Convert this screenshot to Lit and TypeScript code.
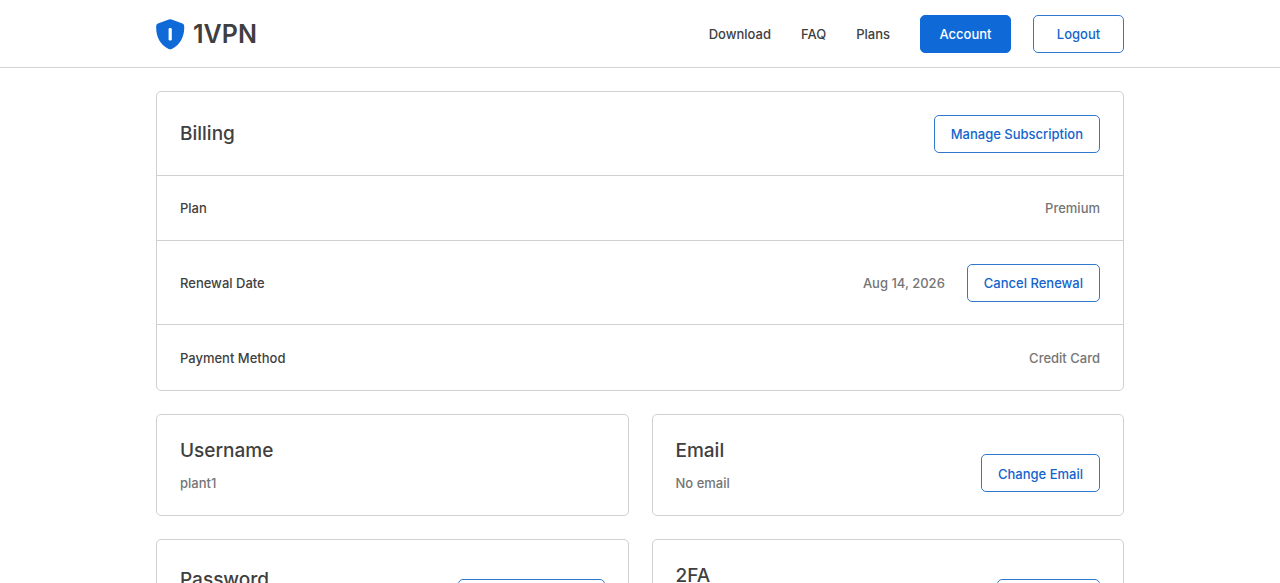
import { LitElement, html, css } from "lit";
import { customElement } from "lit/decorators.js";

@customElement("app-root")
export class AppRoot extends LitElement {
  static styles = css`
    :host {
      display: block;
      height: 100vh;
      overflow: hidden auto;
      scrollbar-width: none;
      background: #fff;
      color: #3f3f3f;
      font: 500 13px/18px Inter, "Noto Sans", sans-serif;
    }
    * { box-sizing: border-box; }
    h1, h2, p, dl, dt, dd { margin: 0; font-weight: 500; }
    a { color: inherit; text-decoration: none; }
    .wrap { width: 100%; max-width: 1016px; margin: 0 auto; padding: 0 24px; }
    .top { border-bottom: 1px solid #d2d5d6; }
    .bar {
      display: flex;
      align-items: center;
      justify-content: space-between;
      min-height: 67px;
    }
    .brand {
      display: flex;
      align-items: center;
      gap: 8px;
      font-size: 25px;
      font-weight: 600;
      line-height: 32px;
    }
    .shield { width: 29px; height: 32px; display: block; }
    .nav, .links, .value { display: flex; align-items: center; }
    .nav { gap: 30px; }
    .links { gap: 30px; }
    .value { gap: 22px; color: #757575; }
    .actions { display: flex; gap: 22px; }
    .btn {
      display: flex;
      align-items: center;
      justify-content: center;
      height: 38px;
      padding: 1px 15px 0;
      border: 1px solid #3178cc;
      border-radius: 5px;
      background: #fff;
      color: #1364cc;
      font: inherit;
      white-space: nowrap;
      cursor: pointer;
    }
    .row .btn, .tile .btn { padding: 1px 16px 0; }
    .wide { min-width: 91px; }
    .solid { background: #0f6ad7; border-color: #0f6ad7; color: #fff; }
    .content {
      display: grid;
      grid-template-columns: 1fr 1fr;
      gap: 23px;
      padding-top: 23px;
      padding-bottom: 23px;
    }
    .card { border: 1px solid #ced1d2; border-radius: 5px; }
    .billing { grid-column: 1 / -1; }
    .row {
      display: flex;
      align-items: center;
      justify-content: space-between;
      min-height: 65px;
      padding: 0 23px;
      border-bottom: 1px solid #ced1d2;
    }
    .tall { min-height: 84px; }
    .row.last { border-bottom: 0; }
    .title { font-size: 19px; line-height: 25px; }
    .tile {
      display: flex;
      align-items: flex-end;
      justify-content: space-between;
      min-height: 102px;
      padding: 23px;
    }
    .info { display: grid; gap: 11px; }
    .middle { align-self: center; }
    .sub { color: #757575; }
    .mask {
      width: 80px;
      height: 10px;
      background: radial-gradient(circle, #757575 3px, transparent 3px) 0 0 / 10px 10px;
    }
  `;

  render() {
    return html`
      <header class="top">
        <div class="wrap bar">
          <a class="brand" href="#">
            <svg class="shield" viewBox="0 0 29 32" aria-hidden="true">
              <path
                fill="#0f6ad7"
                d="M12.800 1.500Q14.200.9 15.600 1.500L26.500 5.600Q28.200 6.300 28.200 8C28.600 18 24.700 26.500 15.700 31Q14.200 31.700 12.700 31C3.700 26.500-.2 18 .2 8Q.2 6.300 1.900 5.600Z"
              />
              <rect x="12.600" y="10" width="3.200" height="12.500" rx="1.300" fill="#fff" />
            </svg>
            <span>1VPN</span>
          </a>
          <div class="nav">
            <nav class="links">
              <a href="#">Download</a>
              <a href="#">FAQ</a>
              <a href="#">Plans</a>
            </nav>
            <div class="actions">
              <a class="btn wide solid" href="#">Account</a>
              <button class="btn wide" type="button">Logout</button>
            </div>
          </div>
        </div>
      </header>
      <main class="wrap content">
        <section class="card billing">
          <div class="row tall">
            <h2 class="title">Billing</h2>
            <button class="btn" type="button">Manage Subscription</button>
          </div>
          <dl>
            <div class="row">
              <dt>Plan</dt>
              <dd class="value">Premium</dd>
            </div>
            <div class="row tall">
              <dt>Renewal Date</dt>
              <dd class="value">
                <span>Aug 14, 2026</span>
                <button class="btn" type="button">Cancel Renewal</button>
              </dd>
            </div>
            <div class="row last">
              <dt>Payment Method</dt>
              <dd class="value">Credit Card</dd>
            </div>
          </dl>
        </section>
        <section class="card tile">
          <div class="info">
            <h2 class="title">Username</h2>
            <p class="sub">plant1</p>
          </div>
        </section>
        <section class="card tile">
          <div class="info">
            <h2 class="title">Email</h2>
            <p class="sub">No email</p>
          </div>
          <button class="btn" type="button">Change Email</button>
        </section>
        <section class="card tile">
          <div class="info middle">
            <h2 class="title">Password</h2>
            <div class="mask"></div>
          </div>
          <button class="btn" type="button">Change Password</button>
        </section>
        <section class="card tile">
          <div class="info">
            <h2 class="title">2FA</h2>
            <p class="sub">Disabled</p>
          </div>
          <button class="btn" type="button">Enable 2FA</button>
        </section>
      </main>
    `;
  }
}
